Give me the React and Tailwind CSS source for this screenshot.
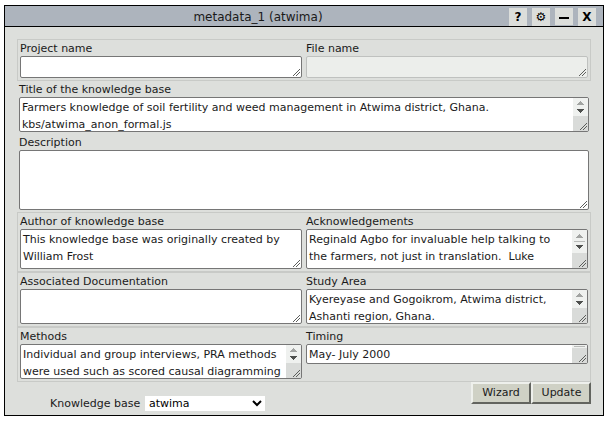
import React from 'react';

function Grip() {
  return (
    <svg className="absolute right-0 bottom-0" width="9" height="9" shapeRendering="crispEdges" fill="#5c5e5c">
      {[0, 1, 2, 3, 4, 5, 6].map((i) => (
        <rect key={i} x={i + 1} y={7 - i} width="1" height="1" />
      ))}
      {[0, 1, 2, 3].map((i) => (
        <rect key={'s' + i} x={i + 4} y={7 - i} width="1" height="1" />
      ))}
    </svg>
  );
}

function Scroller({ thumb }) {
  return (
    <div className="absolute top-0 right-0 bottom-0 flex w-[15px] flex-col bg-[#d9dbd9]">
      <svg className="min-h-0 flex-1 bg-[#eff1ef]" width="15" shapeRendering="crispEdges">
        {thumb === 'only' ? (
          <rect x="2" y="1" width="11" height="1" fill="#b8bab8" />
        ) : (
          <>
            <g fill="#a2a4a2" transform={thumb ? 'translate(0 1)' : undefined}>
              <rect x="7" y="3" width="1" height="1" />
              <rect x="6" y="4" width="3" height="1" />
              <rect x="5" y="5" width="5" height="1" />
              <rect x="4" y="6" width="7" height="1" />
            </g>
            {thumb && <rect x="2" y="11" width="11" height="1" fill="#b8bab8" />}
            <g fill="#4d4f4d" transform={thumb ? 'translate(0 4)' : undefined}>
              <rect x="4" y="11" width="7" height="1" />
              <rect x="5" y="12" width="5" height="1" />
              <rect x="6" y="13" width="3" height="1" />
              <rect x="7" y="14" width="1" height="1" />
            </g>
          </>
        )}
      </svg>
      <div className="h-[15px] shrink-0" />
    </div>
  );
}

function Box({ className, lines = [], scroll, thumb, disabled }) {
  return (
    <div
      className={`relative overflow-hidden rounded-[2px] border px-[2px] pt-[1px] leading-[17px] whitespace-pre ${
        disabled ? 'border-[#bfc1bf] bg-[#eceeeb]' : 'border-[#767676] bg-white'
      } ${className}`}
    >
      {lines.map((l) => (
        <div key={l}>{l}</div>
      ))}
      {scroll && <Scroller thumb={thumb} />}
      <Grip />
    </div>
  );
}

function Field({ label, ...box }) {
  return (
    <div className="w-[282px]">
      <div className="h-4 pt-px leading-4">{label}</div>
      <Box {...box} />
    </div>
  );
}

function Group({ className, children }) {
  return (
    <div className={`-ml-[2px] flex w-[574px] shrink-0 gap-1 border border-[#c8cac7] pl-[2px] ${className}`}>
      {children}
    </div>
  );
}

const titleButton = 'flex w-[18px] justify-center bg-[#dcdedb] font-bold text-black';
const button =
  'flex h-[22px] w-[60px] items-center justify-center border-2 border-t-[#eef0ec] border-l-[#eef0ec] border-r-[#62645f] border-b-[#62645f] bg-[#cfd1c5]';

export default function App() {
  return (
    <div className="h-[422px] w-[611px] bg-white pt-[5px] pl-1 font-['DejaVu_Sans',sans-serif] text-[11px] text-[#1a1a1a]">
      <div className="flex h-[411px] w-[600px] flex-col border border-black bg-[#dddfdc]">
        <div className="flex h-[21px] shrink-0 border-b border-black bg-[#adb4bd]">
          <div className="w-[504px] pt-px pl-[2px] text-center text-[12px] leading-[21px]">metadata_1 (atwima)</div>
          <div className="flex gap-[5px] pt-[2px]">
            <div className={`${titleButton} h-[18px] text-[12px] leading-[19px]`}>?</div>
            <div className={`${titleButton} h-[18px] text-[12px] leading-[19px]`}>
              <span className="font-normal">⚙</span>
            </div>
            <div className={`${titleButton} h-[17px] pt-[9px]`}>
              <div className="h-[2px] w-[10px] bg-black" />
            </div>
            <div className={`${titleButton} h-[18px] text-[12px] leading-[19px]`}>X</div>
          </div>
        </div>

        <div className="flex flex-col pt-3 pl-[14px]">
          <Group className="h-[42px]">
            <Field label="Project name" className="h-[22px]" />
            <Field label="File name" className="h-[22px]" disabled />
          </Group>

          <div className="h-4 pt-px leading-4">Title of the knowledge base</div>
          <Box
            className="h-[35px] w-[570px]"
            scroll
            lines={[
              'Farmers knowledge of soil fertility and weed management in Atwima district, Ghana.',
              'kbs/atwima_anon_formal.js',
            ]}
          />
          <div className="h-[18px] pt-[3px] leading-4">Description</div>
          <Box className="mb-[2px] h-[60px] w-[570px]" />

          <Group className="h-[60px]">
            <Field
              label="Author of knowledge base"
              className="h-10"
              lines={['This knowledge base was originally created by', 'William Frost']}
            />
            <Field
              label="Acknowledgements"
              className="h-10"
              scroll
              thumb="line"
              lines={['Reginald Agbo for invaluable help talking to', 'the farmers, not just in translation.  Luke']}
            />
          </Group>
          <Group className="h-[55px]">
            <Field label="Associated Documentation" className="h-[35px]" />
            <Field
              label="Study Area"
              className="h-[35px]"
              scroll
              lines={['Kyereyase and Gogoikrom, Atwima district,', 'Ashanti region, Ghana.']}
            />
          </Group>
          <Group className="h-[55px]">
            <Field
              label="Methods"
              className="h-[35px]"
              scroll
              lines={['Individual and group interviews, PRA methods', 'were used such as scored causal diagramming']}
            />
            <Field label="Timing" className="h-5" scroll thumb="only" lines={['May- July 2000']} />
          </Group>
        </div>

        <div className="flex justify-between pr-3 pl-[45px]">
          <div className="flex gap-[5px] pt-[14px] leading-[15px]">
            <div className="w-[90px] whitespace-nowrap">Knowledge base</div>
            <div className="flex h-[15px] w-[120px] items-center justify-between bg-white pr-[3px] pl-1 text-black">
              <span>atwima</span>
              <svg width="10" height="7" viewBox="0 0 10 7" fill="none" stroke="#000" strokeWidth="2">
                <path d="M1 1l4 4 4-4" />
              </svg>
            </div>
          </div>
          <div className="flex">
            <div className={button}>Wizard</div>
            <div className={`${button} pl-px`}>Update</div>
          </div>
        </div>
      </div>
    </div>
  );
}
